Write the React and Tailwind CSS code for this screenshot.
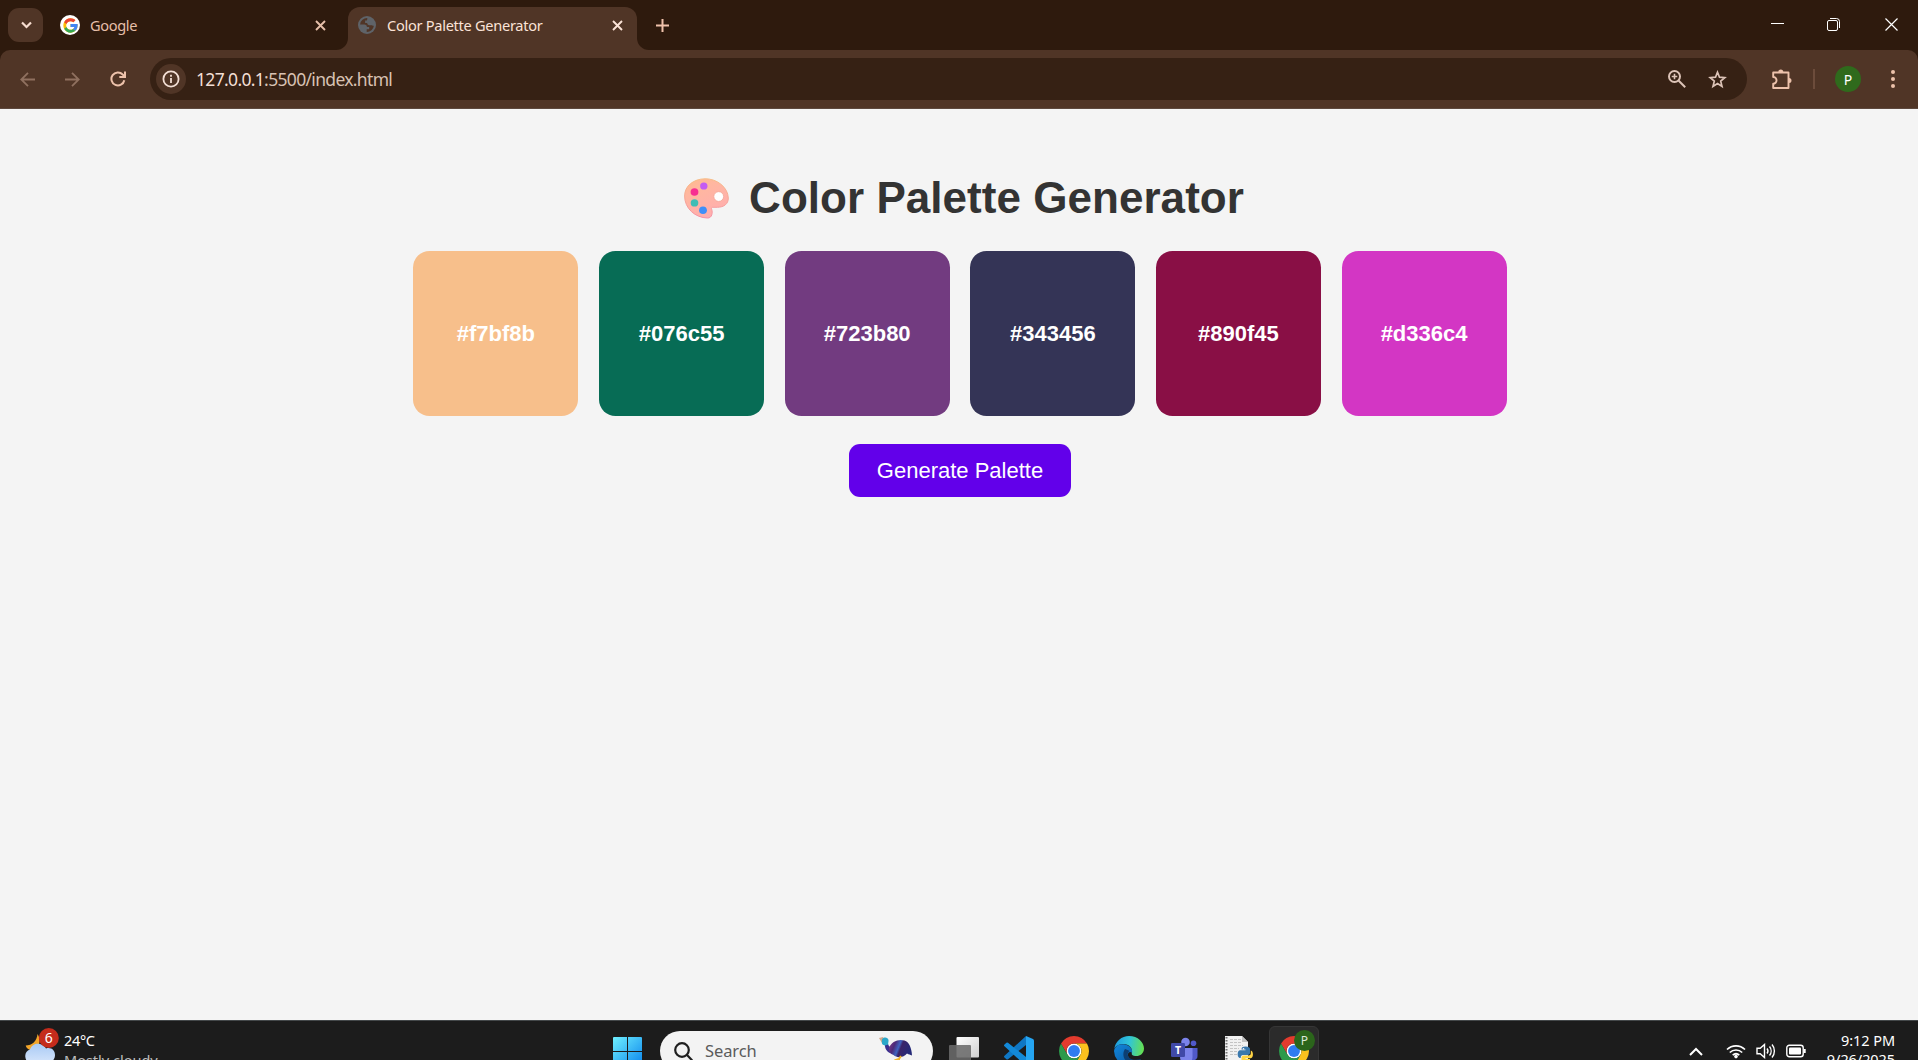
import React from "react";

const UI = "font-['Noto_Sans','Open_Sans',sans-serif]";

function Stroke({ children, w = 20, h = w, box = `0 0 ${w} ${h}`, sw = 1.8, className = "" }) {
  return (
    <svg width={w} height={h} viewBox={box} fill="none" stroke="currentColor" strokeWidth={sw} className={`block shrink-0 ${className}`}>
      {children}
    </svg>
  );
}

function GoogleIcon() {
  return (
    <span className="flex size-5 shrink-0 items-center justify-center rounded-full bg-white">
      <svg width="15" height="15" viewBox="3 3 42 42">
        <path fill="#FBBC05" d="M43.6 20H24v8h11.3C33.7 32.7 29.2 36 24 36c-6.600 0-12-5.400-12-12s5.400-12 12-12c3.100 0 5.800 1.200 8 3l5.700-5.700C34 6.100 29.300 4 24 4 13 4 4 13 4 24s9 20 20 20 20-9 20-20c0-1.300-.1-2.700-.4-4z" />
        <path fill="#EA4335" d="M6.300 14.700l6.600 4.800C14.700 15.100 19 12 24 12c3.100 0 5.800 1.200 8 3l5.700-5.700C34 6.100 29.300 4 24 4 16.300 4 9.700 8.300 6.300 14.700z" />
        <path fill="#34A853" d="M24 44c5.200 0 9.900-2 13.400-5.200l-6.200-5.200C29.200 35.100 26.700 36 24 36c-5.200 0-9.600-3.300-11.300-8l-6.500 5C9.500 39.600 16.200 44 24 44z" />
        <path fill="#4285F4" d="M43.600 20H24v8h11.300c-.8 2.200-2.200 4.200-4.100 5.600l6.200 5.200C37 39.200 44 34 44 24c0-1.300-.1-2.700-.4-4z" />
      </svg>
    </span>
  );
}

function GlobeIcon() {
  return (
    <svg width="18" height="18" viewBox="0 0 18 18" className="block shrink-0">
      <circle cx="9" cy="9" r="9" fill="#5f6368" />
      <path fill="#503526" d="M9.300 2.100 A7 7 0 0 0 2.100 8.400 H6.200 C8.200 8.400 8.900 9.500 8.900 11 H11.200 V13.200 H8.700 V15.900 A7 7 0 0 0 15.900 9.800 C14.800 10 14.300 9.200 13.300 9.200 H11.400 C10 9.200 9.200 8.400 9.200 7 H7.100 V4.600 H8.300 C9 4.600 9.300 4 9.300 2.100Z" />
    </svg>
  );
}

function Close({ className }) {
  return <Stroke w={11} sw={1.9} className={className}><path d="M1 1l9 9M10 1l-9 9" /></Stroke>;
}

function TabStrip() {
  return (
    <header className={`flex h-[50px] bg-[#2e1a0d] text-[15px] ${UI}`}>
      <button className="mt-2 ml-2 flex h-[34px] w-[35px] items-center justify-center rounded-[11px] bg-[#503526] text-[#f7ddd0]">
        <Stroke w={11} h={8} sw={2.2} className="ml-px"><path d="M1 1.500l4.500 4.500L10 1.500" /></Stroke>
      </button>
      <div className="flex h-[50px] w-[293px] items-center pl-[17px] text-[#e6bfa9]">
        <GoogleIcon />
        <span className="mt-[2px] ml-[10px] w-[225px] text-[14.600px] tracking-[-0.350px]">Google</span>
        <Close />
      </div>
      <span className="mt-[38px] size-3 bg-[#503526]"><span className="block size-3 rounded-br-[12px] bg-[#2e1a0d]" /></span>
      <div className="mt-[7px] flex h-[43px] w-[289px] items-center rounded-t-[12px] bg-[#503526] pb-[7px] pl-[10px] text-[#fbe3d7]">
        <GlobeIcon />
        <span className="mt-[2px] ml-[11px] w-[225px] whitespace-nowrap text-[14.600px] tracking-[-0.290px]">Color Palette Generator</span>
        <Close />
      </div>
      <span className="mt-[38px] size-3 bg-[#503526]"><span className="block size-3 rounded-bl-[12px] bg-[#2e1a0d]" /></span>
      <Stroke w={13} sw={2} className="mt-[19px] ml-[7px] text-[#f0c2ab]"><path d="M6.500 0v13M0 6.500h13" /></Stroke>
      <div className="mr-5 ml-auto flex gap-[43px] pt-[18px] text-white">
        <Stroke w={13} sw={1}><path d="M0 5.500h13" /></Stroke>
        <Stroke w={13} sw={1}>
          <rect x=".5" y="2.500" width="10" height="10" rx="1.500" />
          <path d="M3 .5h6.500a3 3 0 0 1 3 3V10" />
        </Stroke>
        <Stroke w={13} sw={1.200} className="ml-[2px]"><path d="M.5.5l12 12M12.500.5l-12 12" /></Stroke>
      </div>
    </header>
  );
}

function Toolbar() {
  return (
    <div className="bg-[#2e1a0d]">
      <div className={`flex h-[59px] items-center rounded-t-[10px] border-b border-[#5d483d] bg-[#503526] text-[#edc2ab] ${UI}`}>
        <Stroke w={15} className="ml-5 text-[#8f705f]"><path d="M15 7.500H1.500M8 .8L1.300 7.500 8 14.200" /></Stroke>
        <Stroke w={15} className="ml-[30px] text-[#8f705f]"><path d="M0 7.500h13.500M7 .8l6.700 6.700L7 14.200" /></Stroke>
        <Stroke w={16} className="ml-[30px]" sw={2}><path d="M14.300 9.200A6.500 6.500 0 1 1 12.700 3.500L15 5.800M15 .5v5.600H9.300" /></Stroke>
        <div className="ml-[24px] flex h-[42px] w-[1597px] items-center rounded-full bg-[#362114] pl-[6px] text-[#f3dfd5]">
          <span className="flex size-[30px] items-center justify-center rounded-full bg-[#503526]">
            <Stroke w={18}><circle cx="9" cy="9" r="7.600" /><path d="M9 8v5M9 4.800v1.900" /></Stroke>
          </span>
          <span className="mt-px ml-[10px] text-[17.500px] tracking-[-0.670px] whitespace-nowrap">
            127.0.0.1<span className="text-[#d8c2b3]">:5500/index.html</span>
          </span>
          <div className="ml-auto flex items-center text-[#dcc3b7]">
            <Stroke w={18} sw={2}><circle cx="6.500" cy="6.500" r="5.500" /><path d="M10.500 10.500l6.700 6.700" /><path d="M6.500 3.700v5.600M3.700 6.500h5.600" strokeWidth="1.600" /></Stroke>
            <Stroke w={19} sw={1.700} className="mr-5 ml-[22px]"><path d="M9.500 2.200l2 5 5.300.4-4.100 3.500 1.300 5.300-4.500-2.900L5 16.400l1.300-5.300L2.200 7.600l5.300-.4z" /></Stroke>
          </div>
        </div>
        <Stroke w={21} sw={1.900} className="ml-[24px]">
          <path d="M2.200 3.500h15.300v15.500H2.200v-4.300a3.300 3.300 0 0 0 0-6.700z" strokeLinejoin="round" />
          <path fill="currentColor" stroke="none" d="M7.300 3a2.500 2.500 0 0 1 5 0zM18 8.900a2.500 2.500 0 0 1 0 5z" />
        </Stroke>
        <span className="ml-[21px] h-5 w-[2px] bg-[#6c4c3b]" />
        <span className="ml-[20px] flex size-[26px] items-center justify-center rounded-full bg-[#2f6a1c] text-[14px] text-white">P</span>
        <svg width="4" height="18" viewBox="0 0 4 18" className="ml-[30px]" fill="currentColor"><circle cx="2" cy="2" r="2" /><circle cx="2" cy="9" r="2" /><circle cx="2" cy="16" r="2" /></svg>
      </div>
    </div>
  );
}

function PaletteIcon() {
  return (
    <svg width="45" height="41" viewBox="0 0 45 42" preserveAspectRatio="none" className="mt-px block shrink-0">
      <defs>
        <linearGradient id="pal" x1="0" y1="0" x2=".5" y2="1"><stop stopColor="#ffb98a" /><stop offset=".35" stopColor="#ffb7a0" /><stop offset="1" stopColor="#ffaeae" /></linearGradient>
        <linearGradient id="rim" x1="0" y1="0" x2="0" y2="1"><stop stopColor="#f6bd87" /><stop offset="1" stopColor="#f58ea4" /></linearGradient>
      </defs>
      <path fill="url(#pal)" stroke="url(#rim)" strokeWidth="1" d="M21 .8C33 .6 44 9.500 44.300 20.500c.2 6-4.500 9.500-11 9.500h-4.500c-1.400 0-1.600.7-1.100 2 1.200 3.500.3 9-4 9C11 40.800.6 31 .6 18.500.6 8 9.500 1 21 .8z" />
      <ellipse cx="34.700" cy="19" rx="4.900" ry="5" fill="#fff" stroke="#f2a596" strokeWidth=".8" />
      <circle cx="19.800" cy="8.200" r="3.700" fill="#c45bf2" />
      <circle cx="10.500" cy="14.300" r="3.900" fill="#f72f91" />
      <circle cx="10.500" cy="25.500" r="3.800" fill="#3fbdb5" />
      <circle cx="19" cy="33" r="3.900" fill="#3f8ff8" />
    </svg>
  );
}

const SWATCHES = [
  ["#f7bf8b", "bg-[#f7bf8b]"],
  ["#076c55", "bg-[#076c55]"],
  ["#723b80", "bg-[#723b80]"],
  ["#343456", "bg-[#343456]"],
  ["#890f45", "bg-[#890f45]"],
  ["#d336c4", "bg-[#d336c4]"],
];

function Page() {
  return (
    <main className="flex h-[911px] flex-col items-center bg-[#f4f4f4] pt-[64px] pl-[2px] font-['Liberation_Sans',Arial,sans-serif]">
      <h1 className="flex h-[50px] items-center pl-[8px] text-[44px] font-bold tracking-[0.040px] whitespace-nowrap text-[#333]">
        <PaletteIcon />
        <span className="ml-[20px]">Color Palette Generator</span>
      </h1>
      <div className="mt-[28px] flex gap-[20.625px]">
        {SWATCHES.map(([hex, bg]) => (
          <div key={hex} className={`flex size-[165px] items-center justify-center rounded-[16.500px] text-[22px] font-bold text-white ${bg}`}>{hex}</div>
        ))}
      </div>
      <button className="mt-[28px] h-[53px] w-[222px] rounded-[11px] bg-[#6200ea] text-[22px] whitespace-nowrap text-white">Generate Palette</button>
    </main>
  );
}

function Chrome() {
  return (
    <svg width="30" height="30" viewBox="0 0 48 48" className="block">
      <circle cx="24" cy="24" r="12" fill="#fff" />
      <path fill="#e33b2e" d="M24 12h20.780a24 24 0 0 0-41.560 0L13.610 30A12 12 0 0 1 24 12z" />
      <path fill="#fbc11e" d="M34.390 30L24 48a24 24 0 0 0 20.780-36H24a12 12 0 0 1 10.390 18z" />
      <path fill="#2c9a4b" d="M13.610 30L3.220 12A24 24 0 0 0 24 48l10.390-18a12 12 0 0 1-20.780 0z" />
      <circle cx="24" cy="24" r="9.500" fill="#2f7cf0" />
    </svg>
  );
}

function Edge() {
  return (
    <svg width="30" height="30" viewBox="0 0 30 30" className="block">
      <defs>
        <linearGradient id="edgeTop" x1="0" y1=".4" x2="1" y2=".5"><stop stopColor="#1c9be0" /><stop offset=".5" stopColor="#31c5d8" /><stop offset="1" stopColor="#66e04f" /></linearGradient>
        <linearGradient id="edgeLow" x1="0" y1="0" x2="1" y2="1"><stop stopColor="#1187dc" /><stop offset="1" stopColor="#0b4f96" /></linearGradient>
      </defs>
      <path fill="url(#edgeLow)" d="M0 15C1 9 7 7.500 11 8.500c5 1 8 5 7 8.500-1.500-2-4.500-1-4 2.500.5 4 6 6.500 13 4A15 15 0 0 1 0 15z" />
      <path fill="url(#edgeTop)" d="M.2 13A15 15 0 0 1 15 0c9 0 15 6.500 15 12.500 0 5-4 7.500-7.500 7.500-4 0-5.500-1.500-4.500-3C19 12 15 8 9.500 8 5 8 1.500 10 .2 13z" />
      <path fill="#0d3f72" d="M11 13c-3 4-2 11 4 14 4 1.500 8.500 0 12-4-7 2-12.500 0-13.200-4-.2-2 .7-3 1.700-4-1-.8-2.500-1.500-4.500-2z" />
    </svg>
  );
}

function Slot({ children }) {
  return <div className="flex w-[55px] items-center justify-center">{children}</div>;
}

function Taskbar() {
  return (
    <footer className={`h-[40px] overflow-hidden border-t border-[#44484a] bg-[#1c1c1c] text-[15px] text-white ${UI}`}>
      <div className="flex h-[60px] items-center">
        <div className="flex w-[600px] items-start self-stretch pl-[25px]">
          <svg width="34" height="40" viewBox="0 0 34 40" className="mt-[6px] block">
            <defs><linearGradient id="cloud" x1="0" y1="0" x2="0" y2="1"><stop stopColor="#a9caf5" /><stop offset="1" stopColor="#d5e5fb" /></linearGradient></defs>
            <path fill="#f3a62a" d="M12.500 7c3.500 5 2.500 13-3 16-4 1-8-1-8.800-4.500C7 18.500 12 14 12.500 7z" />
            <path fill="url(#cloud)" d="M6 36a7 7 0 0 1-1-13.500C6.500 18 11 16 15 17c3 .5 5 2.500 6 4.500 5-1.500 9 1.500 9 6.500 0 4-3 8-7 8z" />
            <circle cx="23.800" cy="11" r="10" fill="#c42b1c" />
            <text x="23.800" y="16" textAnchor="middle" fontSize="14" fill="#fff">6</text>
          </svg>
          <div className="mt-[9px] ml-[5px] text-[14.500px] leading-5 tracking-[-0.350px]">
            <div>24°C</div>
            <div className="tracking-[0px] text-[#bdbdbd]">Mostly cloudy</div>
          </div>
        </div>
        <Slot>
          <svg width="29" height="29" viewBox="0 0 29 29" className="block">
            <defs><linearGradient id="win" x1="0" y1="0" x2="1" y2="1"><stop stopColor="#6ff0ff" /><stop offset="1" stopColor="#0a84ec" /></linearGradient></defs>
            <path fill="url(#win)" d="M1 0h13v14H0V1a1 1 0 0 1 1-1zM15 0h13a1 1 0 0 1 1 1v13H15zM0 15h14v14H0zM15 15h14v14H15z" />
          </svg>
        </Slot>
        <div className="ml-[5px] flex h-[40px] w-[273px] items-center rounded-full bg-[#f3f3f3] pl-[14px] text-[16.500px] text-[#5b5b5b]">
          <Stroke w={19} sw={2.200} className="text-[#1f1f1f]"><circle cx="8" cy="8" r="6.800" /><path d="M12.800 12.800l5.500 5.700" /></Stroke>
          <span className="mt-px ml-[12px] tracking-[-0.100px]">Search</span>
          <svg width="34" height="30" viewBox="0 0 34 30" className="mr-5 ml-auto block">
            <defs><linearGradient id="bird" x1="0" y1="0" x2="1" y2=".3"><stop stopColor="#8a3c8c" /><stop offset=".3" stopColor="#4b2a78" /><stop offset=".5" stopColor="#3f63c0" /><stop offset=".6" stopColor="#3b2468" /><stop offset="1" stopColor="#252a78" /></linearGradient></defs>
            <path fill="#d3a98c" d="M0 2l4-1 1.500 2.500L3 7z" />
            <path fill="#2aa7c9" d="M3 3.500c1.500-3 6-2.500 6.500.5.200 2-.7 3.500-.2 5.500L6 11C6 9.500 5.500 9 4.500 9 3 8.500 2.500 7 3 3.500z" />
            <path fill="#3a2f8f" d="M6 9.500l3.300-1c.4 2 2 3 3.700 2l2 7c-5 .5-9-3-9-8z" />
            <path fill="url(#bird)" d="M10 12c2-6.500 10-9.500 15.500-7.500 4.500 1.500 7 7 7.500 15-2-1-3-.8-5-2-3 4-10 5-13.500 1.500-3-1-5-4-4.500-7z" />
            <path stroke="#f0b429" strokeWidth="2" fill="none" d="M22 20l-2 3-4.500 1.500M20 23v6" />
          </svg>
        </div>
        <div className="ml-[3.500px] flex self-stretch">
          <Slot>
            <svg width="30" height="29" viewBox="0 0 30 29" className="block">
              <defs><linearGradient id="tv" x1="0" y1="0" x2="1" y2="1"><stop stopColor="#fff" /><stop offset="1" stopColor="#cfcfcf" /></linearGradient></defs>
              <rect x="7.500" width="22.500" height="20.500" rx="1" fill="url(#tv)" />
              <rect y="8" width="22" height="20" rx="1" fill="#6a6a6a" fillOpacity=".88" />
            </svg>
          </Slot>
          <Slot>
            <svg width="30" height="30" viewBox="0 0 30 30" className="block">
              <path fill="#0f77c4" d="M22 0v9L4 23.300a1.300 1.300 0 0 1-1.600 0L.5 21.500a1.200 1.200 0 0 1 0-1.800z" />
              <path fill="#1389d8" d="M22 30v-9L4 6.700a1.300 1.300 0 0 0-1.600 0L.5 8.500a1.200 1.200 0 0 0 0 1.800z" />
              <path fill="#25a5f2" d="M22 0l7 3a1.800 1.800 0 0 1 1 1.600v20.800a1.800 1.800 0 0 1-1 1.600l-7 3z" />
            </svg>
          </Slot>
          <Slot><Chrome /></Slot>
          <Slot><Edge /></Slot>
          <Slot>
            <svg width="27" height="28" viewBox="0 0 27 28" className="block">
              <circle cx="14.500" cy="5" r="4.300" fill="#7b83eb" />
              <circle cx="22.500" cy="6.300" r="2.800" fill="#5059c9" />
              <path fill="#5059c9" d="M19 11h7.500v8c0 4-4 5-7.500 4z" />
              <path fill="#7b83eb" d="M9 11h12.500v9c0 9-12.500 9-12.500 0z" />
              <rect y="6" width="14" height="14" rx="1.300" fill="#4049a8" />
              <text x="7" y="16.800" textAnchor="middle" fontSize="10.500" fontWeight="700" fill="#fff">T</text>
            </svg>
          </Slot>
          <Slot>
            <svg width="28" height="30" viewBox="0 0 28 30" className="block">
              <path fill="#f1f1f1" d="M0 0h17l6 6v24H0z" />
              <path fill="#c2c2c2" d="M17 0l6 6h-6z" />
              <path stroke="#777" strokeWidth="2" strokeDasharray="1.500 1.500" d="M1.500 1v28" />
              <path stroke="#c4c4c4" strokeWidth="1" strokeDasharray="3 1" d="M5 3.500h11M5 6.500h11M5 9.500h13M5 12.500h9M5 15.500h8M5 18.500h8" />
              <path fill="#3a78ad" d="M20.500 10.500c3 0 4.500 1 4.500 2.500v4c0 1-1 2-2.200 2H18c-1.500 0-2.300 1-2.300 3h-1.200c-2.500-1-2.500-7 .3-7.700h5.700v-.8H16.500V13c0-1.700 1.500-2.500 4-2.500z" />
              <path fill="#ffd444" d="M25.800 14.500c2.700.5 3 7 0 7.700h-5.300v.8h4.500v2c0 3.500-8.500 3.500-8.500 0v-3.500c0-1 1-2 2.200-2h4.800c1.300 0 2.300-1 2.300-2.300z" />
              <circle cx="18.500" cy="12.800" r=".8" fill="#fff" />
            </svg>
          </Slot>
          <Slot>
            <div className="relative flex h-[50px] w-[50px] items-center justify-center rounded-[6px] border border-[#363636] bg-[#2b2b2b]">
              <Chrome />
              <span className="absolute top-[3px] right-[3px] flex size-[21px] items-center justify-center rounded-full bg-[#2b651b] text-[12px] text-[#dfe8dc]">P</span>
            </div>
          </Slot>
        </div>
        <div className="mr-[23px] ml-auto flex items-center">
          <Stroke w={14} h={9} sw={2} className="mr-[23px]"><path d="M1 8l6-6 6 6" /></Stroke>
          <Stroke w={20} h={16} sw={1.700} className="mr-[10px]">
            <path d="M1 6.500a13 13 0 0 1 18 0M3.800 9.500a9 9 0 0 1 12.400 0M6.700 12.200a5 5 0 0 1 6.600 0" />
            <circle cx="10" cy="13.600" r="1.800" fill="currentColor" stroke="none" />
          </Stroke>
          <Stroke w={20} h={16} sw={1.400} className="mr-[10px]">
            <path d="M1 5.300h3.200L8.500 1.500v13L4.200 10.700H1z" />
            <path d="M11 5.500a4 4 0 0 1 0 5M13.500 3.500a7 7 0 0 1 0 9M16 1.500a10 10 0 0 1 0 13" />
          </Stroke>
          <Stroke w={20} h={14} sw={1.400}>
            <rect x=".8" y="1.300" width="16.400" height="11.400" rx="2.500" />
            <rect x="3" y="3.500" width="12" height="7" rx="1" fill="currentColor" stroke="none" />
            <path d="M18.700 5v4" strokeWidth="2" />
          </Stroke>
          <div className="-mt-[2px] ml-[21px] text-right text-[14.500px] leading-[19px] tracking-[-0.080px]">
            <div>9:12 PM</div>
            <div>9/26/2025</div>
          </div>
        </div>
      </div>
    </footer>
  );
}

export default function App() {
  return (
    <div className="h-[1060px] w-[1918px] overflow-hidden">
      <TabStrip />
      <Toolbar />
      <Page />
      <Taskbar />
    </div>
  );
}
